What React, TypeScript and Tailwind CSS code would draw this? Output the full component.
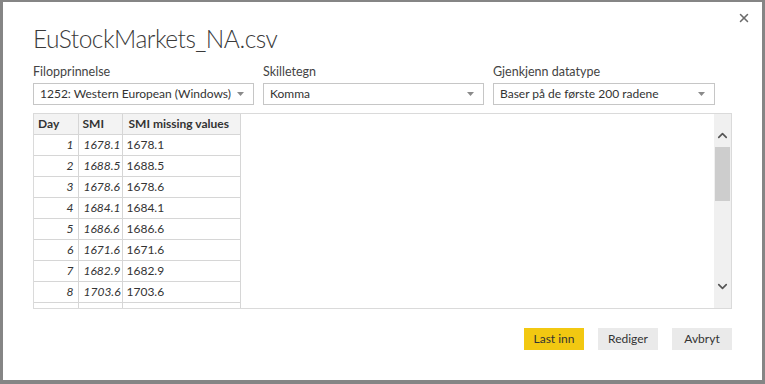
import { ChevronDown, ChevronUp, X } from "lucide-react";

const rows = [
	{ day: 1, smi: "1678.1" },
	{ day: 2, smi: "1688.5" },
	{ day: 3, smi: "1678.6" },
	{ day: 4, smi: "1684.1" },
	{ day: 5, smi: "1686.6" },
	{ day: 6, smi: "1671.6" },
	{ day: 7, smi: "1682.9" },
	{ day: 8, smi: "1703.6" },
];

const fields = [
	{ label: "Filopprinnelse", value: "1252: Western European (Windows)", width: "w-[221px]" },
	{ label: "Skilletegn", value: "Komma", width: "w-[221px]" },
	{ label: "Gjenkjenn datatype", value: "Baser på de første 200 radene", width: "w-[222px]" },
];

function Caret() {
	return (
		<svg width="7" height="4" viewBox="0 0 7 4" aria-hidden="true">
			<path d="M0 0h7L3.5 4z" fill="#8a8a8a" />
		</svg>
	);
}

export default function App() {
	return (
		<div
			className="flex h-[384px] w-[765px] flex-col border-t-2 border-r-3 border-b-4 border-l-3 border-[#858585] bg-white text-[#333]"
			style={{ fontFamily: "Lato, 'Noto Sans', sans-serif" }}
		>
			<div className="flex items-start justify-between pr-[11px] pl-[30px]">
				<h1 className="mt-[19px] text-[24.5px] leading-[36px] font-light tracking-[-0.5px] whitespace-nowrap text-[#3a3a3a]">
					EuStockMarkets_NA.csv
				</h1>
				<X className="mt-[9px] size-[14px] text-[#6b6b6b]" strokeWidth={2.6} />
			</div>

			<div className="mt-[7px] flex gap-[9px] px-[30px]">
				{fields.map((field) => (
					<div key={field.label} className={`flex flex-col ${field.width}`}>
						<span className="text-[12.5px] leading-[16px] text-[#444]">{field.label}</span>
						<div className="mt-[3px] flex h-[22px] items-center justify-between border border-[#c6c6c6] pr-[9px] pl-[6px]">
							<span className="text-[12px] whitespace-nowrap text-[#333]">{field.value}</span>
							<Caret />
						</div>
					</div>
				))}
			</div>

			<div className="mx-[30px] mt-[8px] flex h-[196px] border border-[#dadada]">
				<div className="flex-1 overflow-hidden">
					<table className="w-[206px] table-fixed border-collapse text-[12px] leading-[20px] whitespace-nowrap text-[#333]">
						<colgroup>
							<col className="w-[44px]" />
							<col className="w-[44px]" />
							<col className="w-[118px]" />
						</colgroup>
						<thead>
							<tr className="bg-[#f3f3f3]">
								<th className="border-r border-b border-[#d6d6d6] pl-[4px] text-left font-bold">Day</th>
								<th className="border-r border-b border-[#d6d6d6] pl-[4px] text-left font-bold">SMI</th>
								<th className="border-r border-b border-[#d6d6d6] pl-[6px] text-left font-bold">SMI missing values</th>
							</tr>
						</thead>
						<tbody>
							{rows.map((row) => (
								<tr key={row.day}>
									<td className="border-r border-b border-[#d6d6d6] pr-[4px] text-right italic">{row.day}</td>
									<td className="border-r border-b border-[#d6d6d6] pl-[5px] italic">{row.smi}</td>
									<td className="border-r border-b border-[#d6d6d6] pl-[4px]">{row.smi}</td>
								</tr>
							))}
							<tr>
								<td className="h-[20px] border-r border-[#d6d6d6]"></td>
								<td className="border-r border-[#d6d6d6]"></td>
								<td className="border-r border-[#d6d6d6]"></td>
							</tr>
						</tbody>
					</table>
				</div>
				<div className="flex w-[17px] flex-col items-center bg-[#f0f0f0]">
					<ChevronUp className="mt-[14px] size-[15px] text-[#555]" strokeWidth={2.6} />
					<div className="mt-[4px] h-[54px] w-[15px] bg-[#cdcdcd]" />
					<div className="flex-1" />
					<ChevronDown className="mb-[14px] size-[15px] text-[#555]" strokeWidth={2.6} />
				</div>
			</div>

			<div className="mt-[19px] flex justify-end gap-[14px] px-[30px]">
				<button className="h-[22px] w-[60px] bg-[#f2c811] text-[12px] text-[#333]">Last inn</button>
				<button className="h-[22px] w-[60px] bg-[#eaeaea] text-[12px] text-[#333]">Rediger</button>
				<button className="h-[22px] w-[60px] bg-[#eaeaea] text-[12px] text-[#333]">Avbryt</button>
			</div>
		</div>
	);
}
